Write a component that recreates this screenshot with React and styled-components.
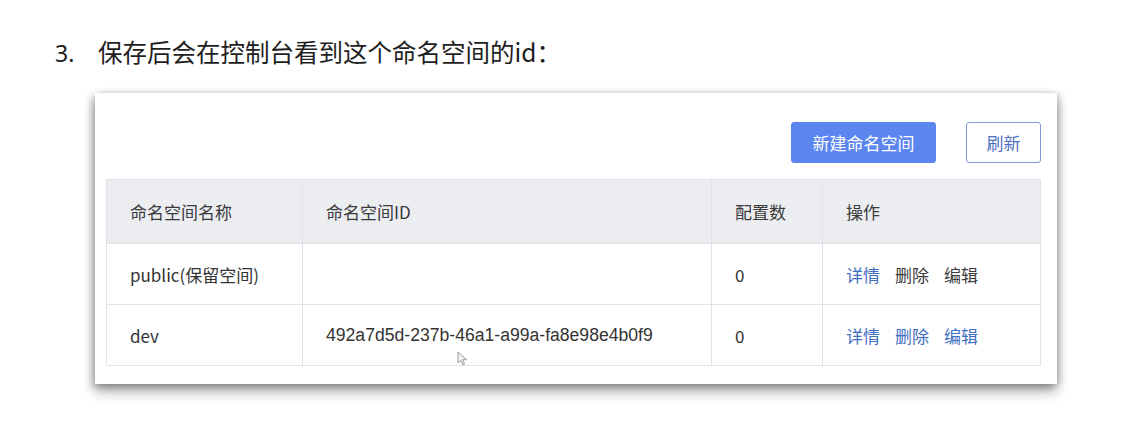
import styled, { createGlobalStyle } from "styled-components";

const GlobalStyle = createGlobalStyle`
  html, body {
    margin: 0;
    padding: 0;
    background: #ffffff;
  }
  body {
    font-family: "Noto Sans CJK SC", "Noto Sans", sans-serif;
    color: #333;
  }
`;

const rows = [
  { name: "public(保留空间)", id: "", count: 0, muted: true },
  { name: "dev", id: "492a7d5d-237b-46a1-a99a-fa8e98e4b0f9", count: 0, muted: false },
];

export default function App() {
  return (
    <Page>
      <GlobalStyle />
      <Heading>
        <Num>3.</Num>
        <span>保存后会在控制台看到这个命名空间的id：</span>
      </Heading>
      <Card>
        <Toolbar>
          <PrimaryButton>新建命名空间</PrimaryButton>
          <GhostButton>刷新</GhostButton>
        </Toolbar>
        <Table>
          <colgroup>
            <col style={{ width: 196 }} />
            <col style={{ width: 409 }} />
            <col style={{ width: 111 }} />
            <col />
          </colgroup>
          <Thead>
            <tr>
              <th>命名空间名称</th>
              <th>命名空间ID</th>
              <th>配置数</th>
              <th>操作</th>
            </tr>
          </Thead>
          <tbody>
            {rows.map((r) => (
              <Tr key={r.name}>
                <td>{r.name}</td>
                <IdCell>{r.id}</IdCell>
                <td>{r.count}</td>
                <td>
                  <Actions>
                    <Link>详情</Link>
                    <Link $muted={r.muted}>删除</Link>
                    <Link $muted={r.muted}>编辑</Link>
                  </Actions>
                </td>
              </Tr>
            ))}
          </tbody>
        </Table>
        <Cursor width="12" height="15" viewBox="0 0 12 15">
          <path
            d="M1 1 L1 12 L3.8 9.4 L5.8 13.8 L7.6 13 L5.7 8.7 L9.6 8.7 Z"
            fill="#f4f4f4"
            stroke="#9a9a9a"
            strokeWidth="1"
            strokeLinejoin="round"
          />
        </Cursor>
      </Card>
    </Page>
  );
}

const Page = styled.div`
  padding: 34px 0 0 55px;
  width: 1121px;
  height: 437px;
  box-sizing: border-box;
`;

const Heading = styled.h1`
  display: flex;
  align-items: baseline;
  margin: 0;
  font-size: 24.5px;
  font-weight: 400;
  line-height: 36px;
  color: #1e1e1e;
`;

const Num = styled.span`
  font-family: "Noto Sans", sans-serif;
  font-size: 23px;
  width: 43px;
`;

const Card = styled.div`
  position: relative;
  margin: 22px 0 0 40px;
  width: 962px;
  height: 291px;
  box-sizing: border-box;
  padding: 29px 16px 0 11px;
  background: #fff;
  box-shadow: 0 8px 12px rgba(0, 0, 0, 0.3), -3px 3px 7px rgba(0, 0, 0, 0.22),
    3px 0 6px rgba(0, 0, 0, 0.16);
`;

const Toolbar = styled.div`
  display: flex;
  justify-content: flex-end;
  gap: 30px;
  margin-bottom: 16px;
`;

const BaseButton = styled.button`
  height: 41px;
  box-sizing: border-box;
  border-radius: 3px;
  font-family: "Noto Sans CJK SC", sans-serif;
  font-size: 17px;
  cursor: pointer;
`;

const PrimaryButton = styled(BaseButton)`
  width: 145px;
  background: #5b86ef;
  border: 1px solid #5b86ef;
  color: #fff;
`;

const GhostButton = styled(BaseButton)`
  width: 75px;
  background: #fff;
  border: 1px solid #7f98d8;
  color: #4d6fc6;
`;

const Table = styled.table`
  width: 935px;
  border-collapse: collapse;
  table-layout: fixed;
  font-size: 17px;
  color: #333;

  th,
  td {
    border: 1px solid #e1e3e8;
    padding: 0 0 0 23px;
    text-align: left;
    white-space: nowrap;
  }
`;

const Thead = styled.thead`
  background: #ebedf1;

  th {
    height: 63px;
    font-weight: 400;
    color: #3a3a3a;
  }
`;

const Tr = styled.tr`
  td {
    height: 60px;
  }
`;

const IdCell = styled.td`
  font-family: "Liberation Sans", sans-serif;
  font-size: 17.6px;
`;

const Actions = styled.div`
  display: flex;
  gap: 15px;
`;

const Link = styled.span`
  color: ${(p) => (p.$muted ? "#3c3c3c" : "#3f6fc0")};
  cursor: pointer;
`;

const Cursor = styled.svg`
  position: absolute;
  left: 362px;
  top: 258px;
`;
